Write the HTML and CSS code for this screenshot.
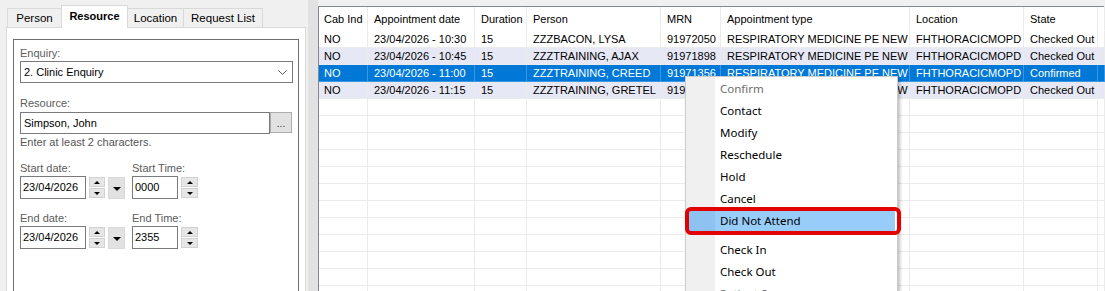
FILE: index.html
```html
<!DOCTYPE html>
<html lang="en">
<head>
    <meta charset="UTF-8">
    <title>Appointment Enquiry</title>
    <link rel="stylesheet" href="styles.css">
</head>
<body>
    <div class="left">
        <div class="tabs">
            <div class="tab tab-person">Person</div>
            <div class="tab tab-resource active">Resource</div>
            <div class="tab tab-location">Location</div>
            <div class="tab tab-request">Request List</div>
        </div>
        <div class="tab-pane">
            <div class="group">
                <div class="label">Enquiry:</div>
                <div class="combo">
                    <span>2. Clinic Enquiry</span>
                    <svg class="chevron" width="9" height="6" viewBox="0 0 9 6"><path d="M0.5 0.5 L4.5 4.5 L8.5 0.5" fill="none" stroke="#5f5f5f" stroke-width="1"/></svg>
                </div>
                <div class="label resource-label">Resource:</div>
                <div class="lookup">
                    <div class="textbox resource-box">Simpson, John</div>
                    <div class="dots-btn">...</div>
                </div>
                <div class="hint">Enter at least 2 characters.</div>

                <div class="dt-row">
                    <div class="dt-col date-col">
                        <div class="label">Start date:</div>
                        <div class="controls">
                            <div class="textbox date-box">23/04/2026</div>
                            <div class="spin"><div class="spin-btn"><i class="up"></i></div><div class="spin-btn"><i class="down"></i></div></div>
                            <div class="drop-btn"><i></i></div>
                        </div>
                    </div>
                    <div class="dt-col">
                        <div class="label">Start Time:</div>
                        <div class="controls">
                            <div class="textbox time-box">0000</div>
                            <div class="spin time-spin"><div class="spin-btn"><i class="up"></i></div><div class="spin-btn"><i class="down"></i></div></div>
                        </div>
                    </div>
                </div>

                <div class="dt-row">
                    <div class="dt-col date-col">
                        <div class="label">End date:</div>
                        <div class="controls">
                            <div class="textbox date-box">23/04/2026</div>
                            <div class="spin"><div class="spin-btn"><i class="up"></i></div><div class="spin-btn"><i class="down"></i></div></div>
                            <div class="drop-btn"><i></i></div>
                        </div>
                    </div>
                    <div class="dt-col">
                        <div class="label">End Time:</div>
                        <div class="controls">
                            <div class="textbox time-box">2355</div>
                            <div class="spin time-spin"><div class="spin-btn"><i class="up"></i></div><div class="spin-btn"><i class="down"></i></div></div>
                        </div>
                    </div>
                </div>
            </div>
        </div>
    </div>

    <div class="splitter"></div>

    <div class="grid-wrap">
        <div class="row head">
            <div>Cab Ind</div><div>Appointment date</div><div>Duration</div><div>Person</div><div>MRN</div><div>Appointment type</div><div>Location</div><div>State</div><div></div>
        </div>
        <div class="row">
            <div>NO</div><div>23/04/2026 - 10:30</div><div>15</div><div>ZZZBACON, LYSA</div><div>91972050</div><div>RESPIRATORY MEDICINE PE NEW</div><div>FHTHORACICMOPD</div><div>Checked Out</div><div></div>
        </div>
        <div class="row alt">
            <div>NO</div><div>23/04/2026 - 10:45</div><div>15</div><div>ZZZTRAINING, AJAX</div><div>91971898</div><div>RESPIRATORY MEDICINE PE NEW</div><div>FHTHORACICMOPD</div><div>Checked Out</div><div></div>
        </div>
        <div class="row selected">
            <div>NO</div><div>23/04/2026 - 11:00</div><div>15</div><div>ZZZTRAINING, CREED</div><div>91971356</div><div>RESPIRATORY MEDICINE PE NEW</div><div>FHTHORACICMOPD</div><div>Confirmed</div><div></div>
        </div>
        <div class="row alt">
            <div>NO</div><div>23/04/2026 - 11:15</div><div>15</div><div>ZZZTRAINING, GRETEL</div><div>91971120</div><div>RESPIRATORY MEDICINE PE NEW</div><div>FHTHORACICMOPD</div><div>Checked Out</div><div></div>
        </div>
        <div class="row"><div></div><div></div><div></div><div></div><div></div><div></div><div></div><div></div><div></div></div>
        <div class="row"><div></div><div></div><div></div><div></div><div></div><div></div><div></div><div></div><div></div></div>
        <div class="row"><div></div><div></div><div></div><div></div><div></div><div></div><div></div><div></div><div></div></div>
        <div class="row"><div></div><div></div><div></div><div></div><div></div><div></div><div></div><div></div><div></div></div>
        <div class="row"><div></div><div></div><div></div><div></div><div></div><div></div><div></div><div></div><div></div></div>
        <div class="row"><div></div><div></div><div></div><div></div><div></div><div></div><div></div><div></div><div></div></div>
        <div class="row"><div></div><div></div><div></div><div></div><div></div><div></div><div></div><div></div><div></div></div>
        <div class="row"><div></div><div></div><div></div><div></div><div></div><div></div><div></div><div></div><div></div></div>
        <div class="row"><div></div><div></div><div></div><div></div><div></div><div></div><div></div><div></div><div></div></div>
        <div class="row"><div></div><div></div><div></div><div></div><div></div><div></div><div></div><div></div><div></div></div>
        <div class="row"><div></div><div></div><div></div><div></div><div></div><div></div><div></div><div></div><div></div></div>
        <div class="row"><div></div><div></div><div></div><div></div><div></div><div></div><div></div><div></div><div></div></div>
    </div>

    <!-- right-click menu over the grid -->
    <div class="context-menu">
        <div class="item disabled">Confirm</div>
        <div class="item">Contact</div>
        <div class="item">Modify</div>
        <div class="item">Reschedule</div>
        <div class="item">Hold</div>
        <div class="item">Cancel</div>
        <div class="item hover">Did Not Attend</div>
        <div class="separator"></div>
        <div class="item">Check In</div>
        <div class="item">Check Out</div>
        <div class="item disabled">Patient Summary</div>
    </div>
    <div class="annotation"></div>
</body>
</html>
```

FILE: styles.css
```css
* {
    box-sizing: border-box;
}

body {
    margin: 0;
    width: 1105px;
    height: 291px;
    overflow: hidden;
    position: relative;
    display: flex;
    align-items: flex-start;
    background-color: #f0f0f0;
    font-family: 'Liberation Sans', Arial, sans-serif;
    font-size: 11px;
    color: #000;
}

/* left panel with tabs */
.left {
    width: 308px;
    height: 330px;
    flex-shrink: 0;
    padding: 5px 0 0 6px;
    display: flex;
    flex-direction: column;
}

.tabs {
    display: flex;
    align-items: flex-end;
    height: 23px;
    margin-bottom: -1px;
}

.tab {
    height: 19px;
    margin-bottom: 1px;
    border: 1px solid #d9d9d9;
    border-bottom: none;
    background-color: #f0f0f0;
    display: flex;
    align-items: center;
    justify-content: center;
    font-size: 11.5px;
}

.tab-person {
    width: 54px;
    margin-left: 1px;
    border-right: none;
}

.tab-resource {
    width: 67px;
}

.tab-location {
    width: 56px;
    border-left: none;
}

.tab-request {
    width: 79px;
    border-left: none;
}

.tab.active {
    position: relative;
    z-index: 1;
    height: 23px;
    margin-bottom: 0;
    background-color: #fff;
    font-weight: bold;
    font-size: 11px;
    padding-bottom: 2px;
}

.tab-pane {
    flex: 1;
    width: 300px;
    border: 1px solid #d9d9d9;
    background-color: #fff;
    padding: 11px 6px 0 6px;
    display: flex;
    flex-direction: column;
}

.group {
    flex: 1;
    border: 1px solid #707070;
    padding: 6px 5px 0 6px;
}

.label {
    line-height: 14px;
    color: #5c5c5c;
}

.combo {
    margin-top: 1px;
    width: 273px;
    height: 22px;
    border: 1px solid #7a7a7a;
    display: flex;
    align-items: center;
    justify-content: space-between;
    padding: 0 5px 0 3px;
}

.chevron {
    margin-top: 1px;
}

.resource-label {
    margin-top: 13px;
}

.lookup {
    display: flex;
    margin-top: 2px;
}

.textbox {
    border: 1px solid #7a7a7a;
    background-color: #fff;
    padding-left: 2px;
    white-space: nowrap;
}

.resource-box {
    width: 250px;
    height: 22px;
    line-height: 20px;
    padding-left: 3px;
}

.dots-btn {
    width: 22px;
    height: 21px;
    background-color: #e1e1e1;
    border: 1px solid #adadad;
    text-align: center;
    line-height: 22px;
    font-size: 10px;
    color: #333;
}

.hint {
    margin-top: 1px;
    line-height: 14px;
    color: #555;
}

.dt-row {
    display: flex;
    margin-top: 12px;
}

.date-col {
    width: 112px;
}

.controls {
    display: flex;
    margin-top: 1px;
    height: 23px;
}

.date-box {
    width: 66px;
    height: 23px;
    line-height: 21px;
}

.time-box {
    width: 46px;
    height: 23px;
    line-height: 21px;
}

.spin {
    width: 16px;
    margin-left: 3px;
    padding-top: 1px;
    display: flex;
    flex-direction: column;
    gap: 1px;
}

.time-spin {
    width: 17px;
}

.spin-btn {
    height: 10px;
    background-color: #e6e6e6;
    border: 1px solid #d2d2d2;
    display: flex;
    align-items: center;
    justify-content: center;
}

.spin-btn i {
    width: 0;
    height: 0;
    border-left: 3px solid transparent;
    border-right: 3px solid transparent;
}

.spin-btn i.up {
    border-bottom: 3px solid #000;
}

.spin-btn i.down {
    border-top: 3px solid #000;
}

.drop-btn {
    width: 17px;
    height: 22px;
    margin-left: 3px;
    margin-top: 1px;
    background-color: #e1e1e1;
    border: 1px solid #d9d9d9;
    display: flex;
    align-items: center;
    justify-content: center;
    padding-top: 2px;
}

.drop-btn i {
    width: 0;
    height: 0;
    border-left: 4px solid transparent;
    border-right: 4px solid transparent;
    border-top: 4px solid #000;
}

.splitter {
    width: 10px;
    height: 291px;
    flex-shrink: 0;
    background-color: #e2e2e2;
}

/* appointment grid */
.grid-wrap {
    width: 786px;
    height: 300px;
    margin-top: 6px;
    flex-shrink: 0;
    border-left: 1px solid #828790;
    border-top: 1px solid #828790;
    background-color: #fff;
}

.row {
    display: grid;
    grid-template-columns: 49px 107px 52px 134px 60px 189px 114px 74px 6px;
    height: 17px;
}

.row > div {
    border-right: 1px solid #ebebeb;
    border-bottom: 1px solid #ebebeb;
    padding-left: 6px;
    line-height: 16px;
    white-space: nowrap;
    overflow: hidden;
}

.row > div:first-child {
    padding-left: 5px;
}

.row.head {
    height: 24px;
}

.row.head > div {
    line-height: 24px;
    border-bottom-color: #fff;
}

.row.alt {
    background-color: #e7e8f5;
}

.row.selected {
    background-color: #0078d7;
    color: #fff;
}

.row.selected > div {
    border-color: #3d97df;
}

/* context menu */
.context-menu {
    position: absolute;
    left: 685px;
    top: 76px;
    width: 213px;
    border: 1px solid #cccccc;
    padding: 1px 0;
    background: linear-gradient(to right, #f0f0f0 0 29px, #fff 29px);
    box-shadow: 2px 2px 3px rgba(0, 0, 0, 0.25);
    font-family: 'Noto Sans', 'Open Sans', sans-serif;
    font-size: 11.5px;
    z-index: 2;
}

.item {
    height: 22px;
    line-height: 22px;
    padding-left: 34px;
    white-space: nowrap;
}

.item.disabled {
    color: #6d6d6d;
}

.item.hover {
    margin: 0 2px;
    padding-left: 32px;
    background: linear-gradient(to right, #8ec3f1 0 27px, #99cdf9 27px);
}

.separator {
    height: 7px;
}

.annotation {
    position: absolute;
    left: 685px;
    top: 207px;
    width: 216px;
    height: 28px;
    border: 4px solid #e30000;
    border-radius: 6px;
    z-index: 3;
}
```
